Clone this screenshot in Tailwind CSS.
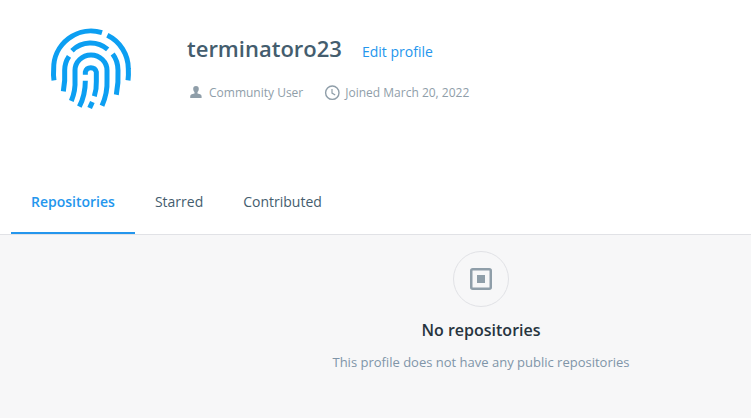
<!DOCTYPE html>
<html lang="en">
<head>
<meta charset="utf-8">
<title>terminatoro23</title>
<script src="https://cdn.jsdelivr.net/npm/@tailwindcss/browser@4"></script>
</head>
<body class="flex h-screen flex-col overflow-hidden bg-white font-['Open_Sans','Noto_Sans',sans-serif]">
<header class="flex h-[170px] shrink-0 pt-5 pl-10">
  <svg class="size-[100px] shrink-0" viewBox="0 0 300 300" fill="none" stroke="#0c9ff2" stroke-width="15">
    <path d="M42 181C40 168 40 158 41 147A112 112 0 0 1 186 38"/>
    <path d="M202 46A112 112 0 0 1 265 147Q266 164 264 181"/>
    <path d="M96 92A79 79 0 0 1 203 88"/>
    <path d="M87 109Q74 128 74 151Q76 180 70 214"/>
    <path d="M218 102Q234 123 234 151Q236 187 229 224"/>
    <path d="M94 243Q107 211 105 180V151A48 46 0 0 1 201 151V180Q203 219 186 257"/>
    <path d="M136 164V156A17 17 0 0 1 169 156V185Q170 207 163 229"/>
    <path d="M136 182Q136 225 118 260"/>
    <path d="M157 246L149 264"/>
  </svg>
  <div class="pt-3 pl-[47px]">
    <div class="flex items-baseline gap-5">
      <h1 class="text-[22px] leading-8 font-semibold text-[#445d6e]">terminatoro23</h1>
      <a class="text-sm leading-5 text-[#2496ed]">Edit profile</a>
    </div>
    <div class="mt-[19px] flex h-5 items-center text-xs text-[#8f9ea9]">
      <svg class="mb-0.5 ml-[3px] h-3 w-3" viewBox="0 0 12 12" fill="#8f9ea9"><path d="M6 0C4.100 0 3.100 1.300 3.200 3C3.300 4.500 3.900 5.500 4.500 6.200V7.500L1.700 8.300Q.2 8.900.2 10.400V12H11.600V10.400Q11.600 8.900 10.100 8.300L7.500 7.500V6.200C8.100 5.500 8.700 4.500 8.800 3C8.900 1.300 7.900 0 6 0Z"/></svg>
      <span class="ml-[7px]">Community User</span>
      <svg class="ml-[21px] size-4" viewBox="0 0 16 16" fill="none" stroke="#8f9ea9" stroke-width="1.400"><circle cx="8.300" cy="7.700" r="6.700"/><path d="M8 3.900V8.100L11.200 10" stroke-width="1.200"/></svg>
      <span class="ml-[5px]">Joined March 20, 2022</span>
    </div>
  </div>
</header>
<nav class="flex h-[65px] shrink-0 border-b border-[#e1e2e6] pl-[11px] text-sm text-[#445d6e]">
  <a class="flex h-16 items-center border-b-2 border-[#2496ed] px-5 pt-0.5 font-semibold text-[#2496ed]">Repositories</a>
  <a class="flex h-16 items-center border-b-2 border-transparent px-5 pt-0.5">Starred</a>
  <a class="flex h-16 items-center border-b-2 border-transparent px-5 pt-0.5">Contributed</a>
</nav>
<main class="flex grow flex-col items-center bg-[#f7f7f8] pt-4 pl-[211px]">
  <div class="flex size-14 items-center justify-center rounded-full border border-[#e1e2e6]">
    <svg class="size-[22px]" viewBox="0 0 22 22"><rect x="1.250" y="1.250" width="19.500" height="19.500" rx="1.500" fill="none" stroke="#8f9ea9" stroke-width="2.500"/><rect x="7" y="7" width="8" height="8" fill="#8f9ea9"/></svg>
  </div>
  <h2 class="mt-[11px] text-base leading-6 font-semibold text-[#27343e]">No repositories</h2>
  <p class="mt-2.5 text-[13px] leading-5 text-[#8095a8]">This profile does not have any public repositories</p>
</main>
</body>
</html>
